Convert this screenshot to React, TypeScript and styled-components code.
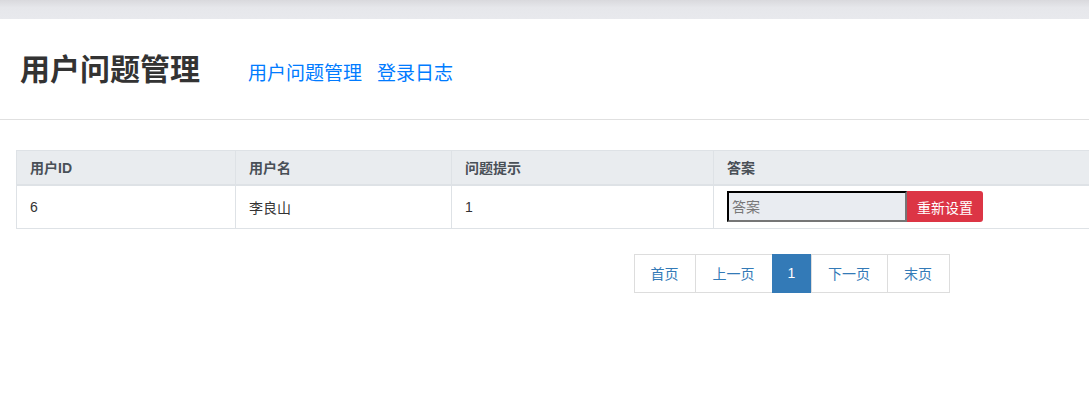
import React, { FC } from "react"
import styled, { createGlobalStyle } from "styled-components"

const GlobalStyle = createGlobalStyle`
  html, body {
    margin: 0;
    padding: 0;
    overflow: hidden;
    background: #fff;
    font-family: "Liberation Sans", "Noto Sans CJK SC", sans-serif;
    color: #333;
  }
`

const TopBar = styled.div`
  height: 19px;
  background: linear-gradient(to bottom, #d9d9dd 0%, #e6e7eb 40%, #e8e9ed 100%);
`

const Header = styled.header`
  display: flex;
  align-items: center;
  height: 100px;
  padding: 0 20px;
  border-bottom: 1px solid #e0e0e0;
  gap: 48px;
`

const Title = styled.h1`
  margin: 0;
  font-size: 30px;
  font-weight: bold;
  color: #333;
  line-height: 1;
  padding-top: 2px;
`

const Nav = styled.nav`
  display: flex;
  gap: 15px;
  padding-top: 8px;
`

const NavLink = styled.a`
  font-size: 19px;
  color: #007bff;
  text-decoration: none;
  line-height: 1;
`

// the page is wider than the window; clip what runs past the right edge
const Viewport = styled.div`
  width: 100%;
  overflow: hidden;
`

const Content = styled.main`
  width: 1550px;
  padding: 30px 0 0 16px;
`

const Table = styled.table`
  width: 100%;
  border-collapse: collapse;
  table-layout: fixed;
  font-size: 14px;
`

const Th = styled.th<{ w?: number }>`
  box-sizing: border-box;
  width: ${p => (p.w ? `${p.w}px` : "auto")};
  height: 34px;
  text-align: left;
  padding: 0 13px;
  background: #e9ecef;
  color: #495057;
  font-weight: bold;
  border: 1px solid #dee2e6;
  border-bottom-width: 2px;
`

const Td = styled.td`
  height: 42px;
  padding: 0 13px;
  color: #333;
  border: 1px solid #dee2e6;
`

const ResetForm = styled.div`
  display: flex;
  align-items: stretch;
  height: 31px;
`

const AnswerInput = styled.input`
  width: 180px;
  box-sizing: border-box;
  border: 2px inset #767676;
  border-top-color: #222;
  border-left-color: #222;
  background: #e9ecf1;
  font-size: 14px;
  padding: 0 3px;
  font-family: inherit;
  &::placeholder {
    color: #777;
  }
`

const ResetButton = styled.button`
  width: 76px;
  border: none;
  background: #dc3545;
  color: #fff;
  font-size: 14px;
  font-family: inherit;
  border-radius: 0 3px 3px 0;
  padding: 0;
`

const Pager = styled.ul`
  display: flex;
  justify-content: center;
  list-style: none;
  margin: 25px 0 0 2px;
  padding: 0;
`

const PageItem = styled.li<{ active?: boolean; w: number }>`
  box-sizing: border-box;
  width: ${p => p.w}px;
  height: 39px;
  display: flex;
  align-items: center;
  justify-content: center;
  font-size: 14px;
  color: ${p => (p.active ? "#fff" : "#337ab7")};
  background: ${p => (p.active ? "#337ab7" : "#fff")};
  border: 1px solid ${p => (p.active ? "#337ab7" : "#ddd")};
  margin-left: -1px;
`

const pages = [
  { label: "首页", w: 62 },
  { label: "上一页", w: 78 },
  { label: "1", w: 40, active: true },
  { label: "下一页", w: 77 },
  { label: "末页", w: 63 },
]

const App: FC = () => {
  return (
    <>
      <GlobalStyle />
      <TopBar />
      <Header>
        <Title>用户问题管理</Title>
        <Nav>
          <NavLink href="#">用户问题管理</NavLink>
          <NavLink href="#">登录日志</NavLink>
        </Nav>
      </Header>
      <Viewport>
        <Content>
          <Table>
            <thead>
              <tr>
                <Th w={219}>用户ID</Th>
                <Th w={216}>用户名</Th>
                <Th w={262}>问题提示</Th>
                <Th>答案</Th>
              </tr>
            </thead>
            <tbody>
              <tr>
                <Td>6</Td>
                <Td>李良山</Td>
                <Td>1</Td>
                <Td>
                  <ResetForm>
                    <AnswerInput placeholder="答案" />
                    <ResetButton>重新设置</ResetButton>
                  </ResetForm>
                </Td>
              </tr>
            </tbody>
          </Table>
          <Pager>
            {pages.map(p => (
              <PageItem key={p.label} w={p.w} active={p.active}>{p.label}</PageItem>
            ))}
          </Pager>
        </Content>
      </Viewport>
    </>
  )
}

export default App
